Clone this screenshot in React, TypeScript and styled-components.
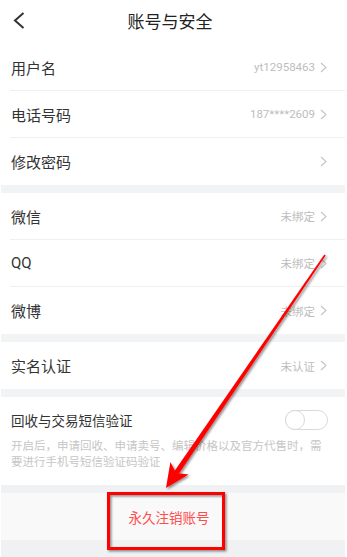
import React from "react";
import styled, { createGlobalStyle } from "styled-components";

const Global = createGlobalStyle`
  html, body { margin: 0; padding: 0; background: #fff; }
  body { font-family: Roboto, "Noto Sans CJK SC", sans-serif; -webkit-font-smoothing: antialiased; }
  * { box-sizing: border-box; }
`;

const Page = styled.div`
  position: relative;
  width: 347px;
  height: 557px;
  overflow: hidden;
  background: #fff;
  display: flex;
  flex-direction: column;
  padding: 0 2px 0 1px;
`;

const Header = styled.div`
  height: 44px;
  display: flex;
  align-items: center;
  position: relative;
  flex-shrink: 0;
`;

const Back = styled.div`
  width: 40px;
  height: 44px;
  display: flex;
  align-items: center;
  padding-left: 12px;
  padding-bottom: 3px;
`;

const Title = styled.div`
  flex: 1;
  text-align: center;
  font-size: 17px;
  color: #222;
  padding-right: 46px;
  padding-bottom: 4px;
`;

const Group = styled.div`
  background: #fff;
  display: flex;
  flex-direction: column;
  padding-left: 9px;
`;

const Band = styled.div<{ $h: number; $c?: string }>`
  height: ${(p) => p.$h}px;
  background: ${(p) => p.$c || "#f2f3f5"};
  flex-shrink: 0;
`;

const Row = styled.div<{ $last?: boolean }>`
  height: 47px;
  display: flex;
  align-items: center;
  justify-content: space-between;
  padding-right: 18px;
  border-bottom: ${(p) => (p.$last ? "none" : "1px solid #efefef")};
  flex-shrink: 0;
`;

const Label = styled.span`
  font-size: 15px;
  color: #333;
  padding-left: 1px;
`;

const Right = styled.span`
  display: flex;
  align-items: center;
  gap: 5px;
  font-size: 11.5px;
  color: #bdbdbd;
`;

const ToggleSection = styled.div`
  background: #fff;
  padding: 12px 18px 15px 10px;
  display: flex;
  flex-direction: column;
  flex-shrink: 0;
`;

const ToggleHead = styled.div`
  display: flex;
  align-items: center;
  justify-content: space-between;
  height: 22px;
`;

const ToggleLabel = styled.span`
  font-size: 13.5px;
  color: #333;
`;

const Switch = styled.div`
  width: 43px;
  height: 20px;
  border-radius: 10px;
  border: 1.5px solid #d9d9d9;
  position: relative;
  margin-right: -1px;
`;

const Knob = styled.div`
  position: absolute;
  left: -1.5px;
  top: -1.5px;
  width: 20px;
  height: 20px;
  border-radius: 50%;
  border: 1.5px solid #d9d9d9;
  background: #fff;
`;

const Desc = styled.p`
  margin: 8px 0 0;
  font-size: 11.5px;
  line-height: 15.5px;
  color: #c6c6c6;
`;

const DangerButton = styled.div`
  height: 47px;
  background: #f9f9f9;
  display: flex;
  align-items: center;
  justify-content: center;
  padding-right: 8px;
  font-size: 13.5px;
  color: #ff4d4d;
  flex-shrink: 0;
`;

const Fill = styled.div`
  flex: 1;
  background: #f0f1f3;
`;

const Overlay = styled.svg`
  position: absolute;
  left: 0;
  top: 0;
  pointer-events: none;
`;

const Chevron = () => (
  <svg width="7" height="11" viewBox="0 0 7 11">
    <polyline points="1,1 6,5.5 1,10" fill="none" stroke="#c4c4c4" strokeWidth="1.1" />
  </svg>
);

type Item = { label: string; value?: string };

const group1: Item[] = [
  { label: "用户名", value: "yt12958463" },
  { label: "电话号码", value: "187****2609" },
  { label: "修改密码" },
];
const group2: Item[] = [
  { label: "微信", value: "未绑定" },
  { label: "QQ", value: "未绑定" },
  { label: "微博", value: "未绑定" },
];

const renderGroup = (items: Item[]) => (
  <Group>
    {items.map((it, i) => (
      <Row key={it.label} $last={i === items.length - 1}>
        <Label>{it.label}</Label>
        <Right>
          {it.value && <span>{it.value}</span>}
          <Chevron />
        </Right>
      </Row>
    ))}
  </Group>
);

// arrow geometry
const tip = { x: 166, y: 488 };
const start = { x: 325, y: 255 };
const dx = tip.x - start.x;
const dy = tip.y - start.y;
const len = Math.hypot(dx, dy);
const ux = dx / len;
const uy = dy / len;
const nx = -uy;
const ny = ux;
const headLen = 24;
const headHalf = 11;
const base = { x: tip.x - headLen * ux, y: tip.y - headLen * uy };
const notch = { x: tip.x - (headLen - 6) * ux, y: tip.y - (headLen - 6) * uy };
const p = (x: number, y: number) => `${x.toFixed(1)},${y.toFixed(1)}`;
const shaft = [
  p(start.x + 0.8 * nx, start.y + 0.8 * ny),
  p(notch.x + 2.6 * nx, notch.y + 2.6 * ny),
  p(notch.x - 2.6 * nx, notch.y - 2.6 * ny),
  p(start.x - 0.8 * nx, start.y - 0.8 * ny),
].join(" ");
const head = [
  p(tip.x, tip.y),
  p(base.x + headHalf * nx, base.y + headHalf * ny),
  p(notch.x, notch.y),
  p(base.x - headHalf * nx, base.y - headHalf * ny),
].join(" ");

export default function App() {
  return (
    <>
      <Global />
      <Page>
        <Header>
          <Back>
            <svg width="12" height="17" viewBox="0 0 12 17">
              <polyline points="10.5,1 2,8.5 10.5,16" fill="none" stroke="#333" strokeWidth="2" />
            </svg>
          </Back>
          <Title>账号与安全</Title>
        </Header>
        {renderGroup(group1)}
        <Band $h={8} />
        {renderGroup(group2)}
        <Band $h={8} />
        <Group>
          <Row $last>
            <Label>实名认证</Label>
            <Right>
              <span>未认证</span>
              <Chevron />
            </Right>
          </Row>
        </Group>
        <Band $h={8} />
        <ToggleSection>
          <ToggleHead>
            <ToggleLabel>回收与交易短信验证</ToggleLabel>
            <Switch>
              <Knob />
            </Switch>
          </ToggleHead>
          <Desc>开启后，申请回收、申请卖号、编辑价格以及官方代售时，需要进行手机号短信验证码验证</Desc>
        </ToggleSection>
        <Band $h={8} $c="#f0f1f3" />
        <DangerButton>永久注销账号</DangerButton>
        <Fill />
        <Overlay width="347" height="557" viewBox="0 0 347 557">
          <defs>
            <filter id="sh" x="-20%" y="-20%" width="140%" height="140%">
              <feDropShadow dx="1.5" dy="1.5" stdDeviation="1.2" floodColor="#000" floodOpacity="0.45" />
            </filter>
          </defs>
          <g filter="url(#sh)">
            <polygon points={shaft} fill="#ff0000" />
            <polygon points={head} fill="#ff0000" />
            <rect x="108.5" y="493.5" width="115" height="55" fill="none" stroke="#ff0000" strokeWidth="3" />
          </g>
        </Overlay>
      </Page>
    </>
  );
}
